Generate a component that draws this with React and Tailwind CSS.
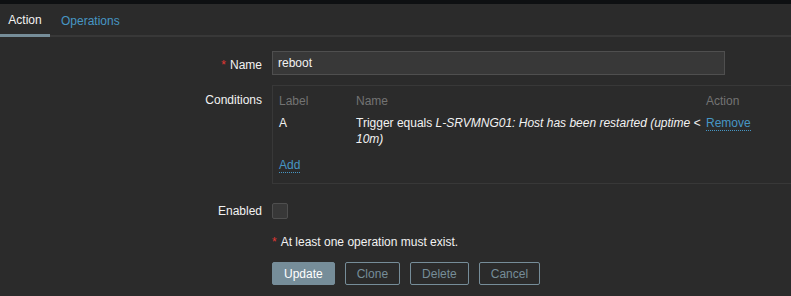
import React from 'react';

const Label = ({ children, required }) => (
  <div className="text-right text-[#f2f2f2]">
    {required && <span className="text-[#e33734] mr-[4px]">*</span>}
    {children}
  </div>
);

const Btn = ({ children, primary }) => (
  <button
    className={
      primary
        ? 'h-[23px] px-[11px] rounded-[2px] border border-[#768d99] bg-[#768d99] text-white'
        : 'h-[23px] px-[11px] rounded-[2px] border border-[#768d99] bg-transparent text-[#768d99]'
    }
  >
    {children}
  </button>
);

export default function App() {
  return (
    <div className="w-[791px] h-[296px] overflow-hidden bg-[#2b2b2b] text-[12px] font-['Liberation_Sans',Arial,sans-serif] text-[#f2f2f2]">
      <div className="h-[4px] bg-[#0e1012]" />
      <div className="flex h-[33px] border-b-[2px] border-[#383838]">
        <div className="w-[50px] flex items-center justify-center pt-[2px] border-b-[3px] border-[#768d99] -mb-[2px] text-[#f2f2f2]">
          Action
        </div>
        <div className="flex items-center pt-[2px] pl-[11px] text-[#4796c4]">Operations</div>
      </div>

      <div className="grid grid-cols-[262px_1fr] gap-x-[10px] pt-[14px]">
        <div className="pt-[5px]">
          <Label required>Name</Label>
        </div>
        <div>
          <input
            readOnly
            value="reboot"
            className="w-[453px] h-[24px] px-[5px] bg-[#383838] border border-[#4f4f4f] text-[#f2f2f2] outline-none"
          />
        </div>

        <div className="pt-[6px] mt-[10px]">
          <Label>Conditions</Label>
        </div>
        <div className="mt-[10px] border border-[#383838] border-r-0 h-[99px] pl-[6px] pt-[6px]">
          <div className="grid grid-cols-[77px_350px_1fr] text-[#737373]">
            <div>Label</div>
            <div>Name</div>
            <div>Action</div>
          </div>
          <div className="grid grid-cols-[77px_350px_1fr] mt-[5px] leading-[16px]">
            <div>A</div>
            <div>
              Trigger equals <i>L-SRVMNG01: Host has been restarted (uptime &lt; 10m)</i>
            </div>
            <div>
              <span className="text-[#4796c4] border-b border-dotted border-[#4796c4]">Remove</span>
            </div>
          </div>
          <div className="mt-[9px]">
            <span className="text-[#4796c4] border-b border-dotted border-[#4796c4]">Add</span>
          </div>
        </div>

        <div className="mt-[19px] flex items-center justify-end h-[16px]">
          <Label>Enabled</Label>
        </div>
        <div className="mt-[19px]">
          <div className="w-[16px] h-[16px] border border-[#4f4f4f] bg-[#383838] rounded-[2px]" />
        </div>

        <div />
        <div className="mt-[14px]">
          <span className="text-[#e33734] mr-[4px]">*</span>At least one operation must exist.
        </div>

        <div />
        <div className="mt-[11px] flex gap-[10px]">
          <Btn primary>Update</Btn>
          <Btn>Clone</Btn>
          <Btn>Delete</Btn>
          <Btn>Cancel</Btn>
        </div>
      </div>
    </div>
  );
}
